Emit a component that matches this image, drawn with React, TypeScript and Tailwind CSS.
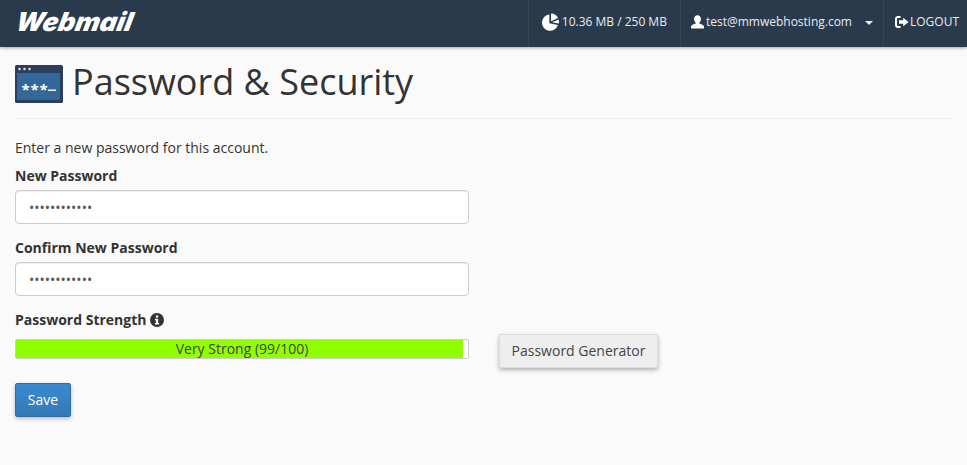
import React from 'react';

const openSans = { fontFamily: '"Open Sans", sans-serif' };

function QuotaIcon() {
  return (
    <svg viewBox="0 0 18.6 18.6" className="w-[18px] h-[18px]" fill="white">
      <path d="M8.6 1.6 A8.4 8.4 0 1 0 17.4 12.4 L8.6 10.6 Z" />
      <path d="M10.4 0.6 A8 8 0 0 1 17.6 5.2 L10.4 8.4 Z" />
      <path d="M11.4 9.6 L18.2 6.8 A8 8 0 0 1 18.4 10.8 Z" />
    </svg>
  );
}

function UserIcon() {
  return (
    <svg viewBox="0 0 13 14" className="w-[13px] h-[14px] mr-[2px]" fill="white">
      <path d="M6.5 0.2 C8.6 0.2 9.9 1.9 9.9 4 C9.9 5.6 9.2 7 8.3 7.8 L8.3 8.6 C10.4 9.3 12.8 10 13 11.6 L13 13.6 L0 13.6 L0 11.6 C0.2 10 2.6 9.3 4.7 8.6 L4.7 7.8 C3.8 7 3.1 5.6 3.1 4 C3.1 1.9 4.4 0.2 6.5 0.2 Z" />
    </svg>
  );
}

function LogoutIcon() {
  return (
    <svg viewBox="0 0 14 12" className="w-[14px] h-[12px]" fill="white">
      <path d="M5.5 0 L5.5 2 L3 2 C2.4 2 2 2.4 2 3 L2 9 C2 9.6 2.4 10 3 10 L5.5 10 L5.5 12 L3 12 C1.3 12 0 10.7 0 9 L0 3 C0 1.3 1.3 0 3 0 Z" />
      <path d="M8.2 1.8 L13.6 6 L8.2 10.2 L8.2 7.8 L4 7.8 L4 4.2 L8.2 4.2 Z" />
    </svg>
  );
}

function InfoIcon() {
  return (
    <svg viewBox="0 0 14 14" className="w-[14px] h-[14px]">
      <circle cx="7" cy="7" r="7" fill="#333" />
      <rect x="5.9" y="2.4" width="2.3" height="2.2" fill="#fafafa" />
      <path d="M4.9 5.7 L8.2 5.7 L8.2 9.9 L9.2 9.9 L9.2 11.4 L4.9 11.4 L4.9 9.9 L5.9 9.9 L5.9 7.2 L4.9 7.2 Z" fill="#fafafa" />
    </svg>
  );
}

function PageIcon() {
  return (
    <svg viewBox="0 0 48 38" className="w-12 h-[38px] shrink-0 mt-[3px]">
      <rect width="48" height="38" rx="1.5" fill="#2c3e5e" />
      <rect x="2" y="8" width="43" height="27" fill="#336699" />
      <circle cx="4.5" cy="4" r="1.2" fill="#e8ecf0" />
      <circle cx="9.5" cy="4" r="1.2" fill="#e8ecf0" />
      <circle cx="14.5" cy="4" r="1.2" fill="#e8ecf0" />
      <text x="6.5" y="30" fill="#fff" fontSize="15" fontWeight="700" fontFamily="Open Sans, sans-serif" letterSpacing="0.8">***</text>
      <rect x="33" y="24.5" width="8" height="1.4" fill="#fff" />
    </svg>
  );
}

function PasswordField({ label }: { label: string }) {
  return (
    <div className="mb-[14px]">
      <label className="block text-[14px] leading-[20px] font-bold text-[#333] mb-[4px]">{label}</label>
      <input
        type="password"
        readOnly
        defaultValue="abcdefghijkl"
        className="block w-[454px] h-[34px] pl-[13px] pr-3 bg-white border border-[#ccc] rounded text-[14px] text-[#555] shadow-[inset_0_1px_1px_rgba(0,0,0,0.075)] outline-none"
        style={openSans}
      />
    </div>
  );
}

export default function App() {
  return (
    <div className="min-h-[465px] bg-[#fafafa] text-[#333] overflow-hidden" style={openSans}>
      <header className="h-[47px] bg-[#2a3a4d] flex items-center justify-between shadow-[0_1px_3px_rgba(0,0,0,0.35)]">
        <div
          className="pl-[16px] pb-[3px] text-white text-[26px] leading-none font-black italic tracking-[0.1px] -skew-x-12"
          style={{ fontFamily: 'Inter, sans-serif' }}
        >
          Webmail
        </div>
        <div className="flex h-full text-[#e8ecf0] text-[12px]">
          <div className="flex items-center gap-[3px] pl-[12px] pr-[13px] pb-[4px] border-l border-[#34455a]">
            <QuotaIcon />
            <span>10.36 MB / 250 MB</span>
          </div>
          <div className="flex items-center pl-[10px] pr-[10px] pb-[4px] border-l border-[#34455a]">
            <UserIcon />
            <span>test@mmwebhosting.com</span>
            <span className="ml-[13px] mt-[2px] border-x-[4px] border-x-transparent border-t-[4px] border-t-[#e8ecf0]" />
          </div>
          <div className="flex items-center gap-[1px] pl-[11px] pr-[8px] pb-[4px] border-l border-[#34455a]">
            <LogoutIcon />
            <span>LOGOUT</span>
          </div>
        </div>
      </header>

      <main className="px-[15px]">
        <div className="flex items-center gap-[9px] h-[72px] w-[937px] border-b border-[#eee]">
          <PageIcon />
          <h1 className="text-[36px] leading-[40px] pb-[2px] font-normal text-[#333]">Password &amp; Security</h1>
        </div>

        <p className="text-[14px] leading-[20px] mt-[19px] mb-[8px]">Enter a new password for this account.</p>

        <PasswordField label="New Password" />
        <PasswordField label="Confirm New Password" />

        <div className="flex items-center gap-[4px] text-[14px] leading-[20px] font-bold mt-[2px]">
          Password Strength
          <InfoIcon />
        </div>

        <div className="flex items-start">
          <div className="w-[454px] h-[20px] mt-[9px] bg-white border border-[#ccc] rounded-[2px] relative overflow-hidden">
            <div className="h-full w-[447px] bg-[#90ff00]" />
            <span className="absolute inset-0 text-center text-[14px] leading-[18px] text-[#444]">Very Strong (99/100)</span>
          </div>
          <button className="ml-[30px] mt-[4px] w-[159px] h-[34px] pb-[2px] bg-[#eee] border border-[#ddd] rounded-[2px] text-[14px] text-[#444] shadow-[0_2px_4px_rgba(0,0,0,0.3)]">
            Password Generator
          </button>
        </div>

        <button className="mt-[15px] w-[56px] h-[34px] pb-[2px] bg-gradient-to-b from-[#3a8ad0] to-[#337ab7] border border-[#2e6da4] rounded-[2px] text-[14px] text-white shadow-[0_2px_4px_rgba(0,0,0,0.25)]">
          Save
        </button>
      </main>
    </div>
  );
}
